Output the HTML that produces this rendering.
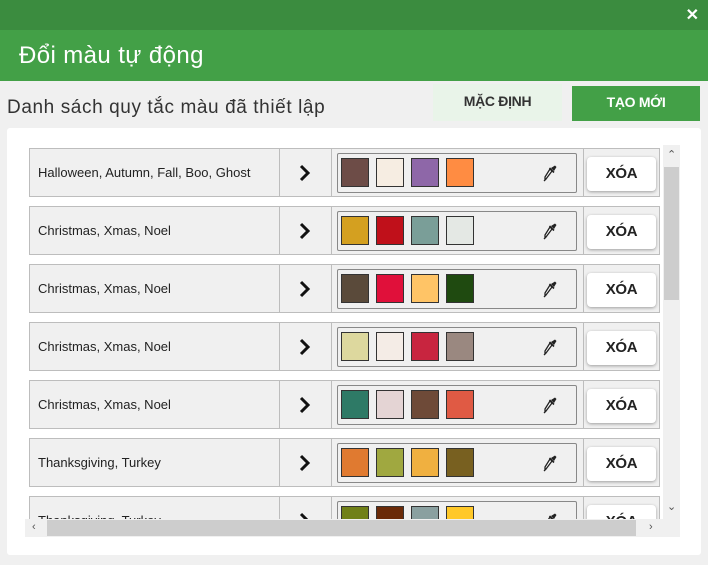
<!DOCTYPE html>
<html><head><meta charset="utf-8"><style>
*{box-sizing:border-box;margin:0;padding:0}
body{width:708px;height:565px;background:#f0f0f0;font-family:"Liberation Sans",sans-serif;position:relative;overflow:hidden}
.top{position:absolute;left:0;top:0;width:708px;height:30px;background:#3b8c3f}
.x{position:absolute;right:9px;top:5px;color:#fff;font-weight:bold;font-size:16px}
.title{position:absolute;left:0;top:30px;width:708px;height:51px;background:#43a047;color:#fff;font-size:24px;padding:12px 0 0 19px;letter-spacing:0.4px}
.sub{position:absolute;left:7px;top:97px;font-size:19px;color:#333;letter-spacing:0.6px}
.b1{position:absolute;left:433px;top:84px;width:129px;height:37px;background:#e9f4e9;color:#333;font-size:14px;font-weight:bold;text-align:center;line-height:34px;letter-spacing:-0.3px}
.b2{position:absolute;left:572px;top:86px;width:128px;height:35px;background:#43a047;color:#fff;font-size:14px;font-weight:bold;text-align:center;line-height:33px;letter-spacing:-0.3px}
.panel{position:absolute;left:7px;top:128px;width:694px;height:427px;background:#fff;border-radius:3px}
.view{position:absolute;left:25px;top:145px;width:638px;height:374px;overflow:hidden}
.row{position:absolute;left:4px;width:631px;height:49px;background:#f0f0f0;border:1px solid #bdbdbd}
.nm{position:absolute;left:0;top:0;width:250px;height:47px;border-right:1px solid #bdbdbd;font-size:13px;color:#222;line-height:47px;padding-left:8px}
.ar{position:absolute;left:250px;top:0;width:52px;height:47px;border-right:1px solid #bdbdbd}
.ar svg{position:absolute;left:19px;top:15px}
.cb{position:absolute;left:307px;top:4px;width:240px;height:40px;border:1px solid #888;border-radius:2px}
.sw{position:absolute;top:4px;width:28px;height:29px;border:1px solid #333}
.dr{position:absolute;left:204px;top:10px}
.cell{position:absolute;left:553px;top:0;width:1px;height:47px;background:#bdbdbd}
.xo{position:absolute;left:557px;top:8px;width:69px;height:34px;background:#fff;border-radius:4px;box-shadow:0 1px 3px rgba(0,0,0,.35);text-align:center;line-height:34px;font-weight:bold;font-size:15px;color:#222;letter-spacing:-0.3px}
.vs{position:absolute;left:663px;top:145px;width:17px;height:374px;background:#f0f0f0}
.vt{position:absolute;left:664px;top:167px;width:15px;height:133px;background:#cdcdcd}
.hs{position:absolute;left:25px;top:519px;width:655px;height:18px;background:#f0f0f0}
.ht{position:absolute;left:47px;top:520px;width:589px;height:16px;background:#cdcdcd}
.ic{position:absolute;font-size:11px;color:#555}
</style></head><body>
<div class="top"><span class="x">✕</span></div>
<div class="title">Đổi màu tự động</div>
<div class="sub">Danh sách quy tắc màu đã thiết lập</div>
<div class="b1">MẶC ĐỊNH</div>
<div class="b2">TẠO MỚI</div>
<div class="panel"></div>
<div class="view" id="v"></div>
<div class="vs"></div><div class="vt"></div>
<div class="ic" style="left:667px;top:148px">&#8963;</div>
<div class="ic" style="left:667px;top:500px">&#8964;</div>
<div class="hs"></div><div class="ht"></div>
<div class="ic" style="left:32px;top:521px">&lsaquo;</div>
<div class="ic" style="left:649px;top:521px">&rsaquo;</div>
<script>
var rows=[["Halloween, Autumn, Fall, Boo, Ghost",["#6d4c47","#f6ede2","#8e67a8","#ff8c42"]],
["Christmas, Xmas, Noel",["#d4a020","#c0101a","#7a9e98","#e4e8e4"]],
["Christmas, Xmas, Noel",["#5a4a3a","#e0103a","#ffc466","#1f4a10"]],
["Christmas, Xmas, Noel",["#ddd89e","#f4ece6","#c8253f","#9a8880"]],
["Christmas, Xmas, Noel",["#2e7a66","#e4d4d4","#6e4a38","#e05a44"]],
["Thanksgiving, Turkey",["#e07a30","#a0a840","#f0b040","#786020"]],
["Thanksgiving, Turkey",["#708018","#6a2a08","#8aa0a0","#ffc828"]]];
var h="";
rows.forEach(function(r,i){
h+='<div class="row" style="top:'+(3+i*58)+'px"><div class="nm">'+r[0]+'</div><div class="ar"><svg width="12" height="18" viewBox="0 0 12 18"><path d="M2 2 L9 9 L2 16" stroke="#111" stroke-width="3" fill="none"/></svg></div><div class="cb">';
r[1].forEach(function(c,j){h+='<div class="sw" style="left:'+(3+j*35)+'px;background:'+c+'"></div>';});
h+='<svg class="dr" width="16" height="18" viewBox="0 0 16 18"><path d="M3 16 L2 17 M3 16 L4 15 L10 7 L8 5 L3 13 Z" stroke="#222" stroke-width="1.3" fill="#fff" stroke-linejoin="round"/><path d="M9 4 L13 1.5 L14.5 3 L12 7 Z" fill="#222"/><path d="M7.5 4 L12 8.5" stroke="#222" stroke-width="1.6"/></svg></div><div class="cell"></div><div class="xo">XÓA</div></div>';
});
document.getElementById("v").innerHTML=h;
</script>
</body></html>
